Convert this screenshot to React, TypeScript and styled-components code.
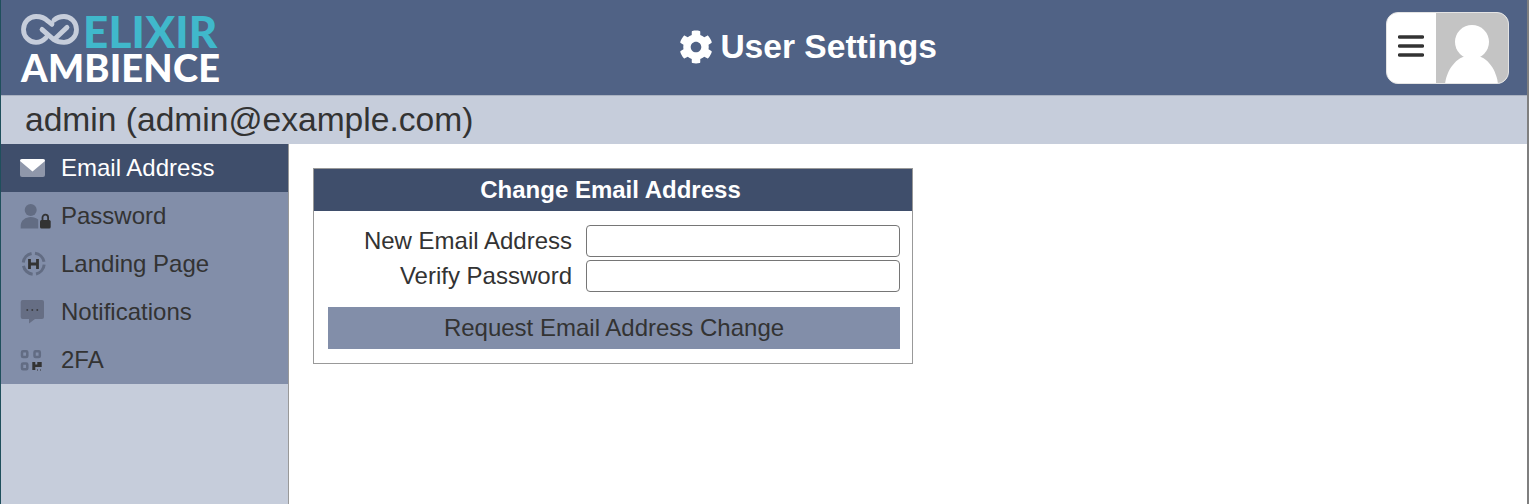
import React from 'react'
import styled, { createGlobalStyle } from 'styled-components'
import { FaCog } from 'react-icons/fa'

const GlobalStyle = createGlobalStyle`
  html, body {
    margin: 0;
    padding: 0;
    height: 100%;
    background: #ffffff;
  }
  body {
    font-family: "Liberation Sans", Arial, sans-serif;
    color: #333333;
    overflow: hidden;
  }
`

const Page = styled.div`
  width: 1529px;
  height: 504px;
  box-sizing: border-box;
  display: flex;
  flex-direction: column;
  border-left: 1px solid #1f4f5c;
  border-right: 2px solid #7f7f7f;
`

const Header = styled.header`
  height: 95px;
  flex: none;
  box-sizing: border-box;
  display: flex;
  justify-content: space-between;
  align-items: center;
  padding: 0 18px 0 20px;
  background: #506285;
`

const Logo = styled.div`
  display: flex;
  flex-direction: column;
  font-family: Lato, "Liberation Sans", sans-serif;
  padding-top: 3px;
`

const LogoTop = styled.div`
  display: flex;
  align-items: center;
  gap: 2px;
  height: 37px;
  line-height: 35px;
  color: #40b8cb;
  font-size: 44px;
  font-weight: 900;
  letter-spacing: 0.2px;
`

const LogoBottom = styled.div`
  height: 35px;
  line-height: 35px;
  color: #ffffff;
  font-size: 38px;
  font-weight: 900;
  letter-spacing: 0.2px;
`

const LogoMark = styled.svg`
  margin-bottom: 3px;
`

const Title = styled.h1`
  margin: 0 0 2px 10px;
  display: flex;
  align-items: center;
  gap: 7px;
  color: #ffffff;
  font-size: 33.6px;
  font-weight: 700;
`

const UserMenu = styled.div`
  width: 123px;
  height: 72px;
  display: flex;
  border-radius: 12px;
  overflow: hidden;
  background: #ffffff;
  border: 1px solid #e4e4e4;
  box-sizing: border-box;
`

const MenuButton = styled.div`
  width: 49px;
  box-sizing: border-box;
  padding-bottom: 4px;
  display: flex;
  align-items: center;
  justify-content: center;
`

const Avatar = styled.div`
  flex: 1;
  background: #c4c4c4;
`

const UserBar = styled.div`
  height: 49px;
  flex: none;
  box-sizing: border-box;
  padding-left: 24px;
  border-top: 1px solid #aab2c1;
  background: #c6cddb;
  font-size: 33.6px;
  line-height: 47px;
  color: #333333;
`

const Body = styled.div`
  flex: 1;
  display: flex;
  min-height: 0;
`

const Sidebar = styled.nav`
  width: 287px;
  flex: none;
  background: #c6cddb;
  border-right: 1px solid #999999;
`

const NavItem = styled.div<{ $active?: boolean }>`
  height: 48px;
  display: flex;
  align-items: center;
  gap: 13px;
  padding-left: 17px;
  font-size: 24px;
  background: ${(p) => (p.$active ? '#3f4e6b' : '#828ea9')};
  color: ${(p) => (p.$active ? '#ffffff' : '#333333')};
`

const NavIcon = styled.svg`
  width: 30px;
  height: 30px;
  flex: none;
  overflow: visible;
`

const Content = styled.main`
  flex: 1;
  padding: 24px;
`

const Panel = styled.section`
  width: 600px;
  box-sizing: border-box;
  border: 1px solid #999999;
`

const PanelTitle = styled.div`
  height: 42px;
  background: #3f4e6b;
  color: #ffffff;
  font-size: 24px;
  font-weight: 700;
  line-height: 42px;
  padding-right: 5px;
  text-align: center;
`

const PanelBody = styled.div`
  padding: 14px 12px 14px 14px;
`

const FormRow = styled.label`
  display: grid;
  grid-template-columns: 244px 314px;
  column-gap: 14px;
  align-items: center;
  height: 32px;
  margin-bottom: 3px;
  font-size: 24px;
  text-align: right;
`

const TextInput = styled.input`
  width: 314px;
  height: 32px;
  box-sizing: border-box;
  border: 1px solid #767676;
  border-radius: 4px;
  padding: 0 4px;
  background: #ffffff;
`

const SubmitButton = styled.button`
  display: block;
  width: 572px;
  height: 42px;
  margin-top: 15px;
  padding: 0;
  border: 0;
  background: #828ea9;
  color: #333333;
  font-family: inherit;
  font-size: 24px;
`

const InfinityMark = () => (
  <LogoMark width="60" height="32" viewBox="0 0 60 31" fill="none" preserveAspectRatio="none">
    <path
      d="M31 10 L27 7 C24 4 20 2.500 15 2.500 A12.500 12.500 0 0 0 15 27.500 C19 27.500 22 26 25 23 M21 15 L33 25 C36 27 39 27.500 43 27.500 A12.500 12.500 0 0 0 43 2.500 C39 2.500 36 3.500 33 6 M34 24 L46 13"
      stroke="#c6cddb"
      strokeWidth="4.800"
      strokeLinecap="round"
    />
  </LogoMark>
)

const MailIcon = () => (
  <NavIcon viewBox="0 0 30 30">
    <rect x="2" y="6" width="25" height="18" rx="2" fill="#8f97aa" />
    <path d="M2 8a2 2 0 0 1 2-2h21a2 2 0 0 1 2 2L14.500 18.500z" fill="#ffffff" />
  </NavIcon>
)

const PasswordIcon = () => (
  <NavIcon viewBox="0 0 30 30">
    <circle cx="12.700" cy="9" r="6" fill="#626c83" />
    <path d="M2.700 27.500v-3c0-5 5-8.500 10-8.500 3 0 5.500 1 7.500 2.500v9z" fill="#626c83" />
    <rect x="22" y="19" width="10.700" height="8.500" rx="1.500" fill="#333333" />
    <path d="M24.500 19.500v-3a2.800 2.800 0 0 1 5.600 0v3" fill="none" stroke="#333333" strokeWidth="1.800" />
  </NavIcon>
)

const LandingIcon = () => (
  <NavIcon viewBox="0 0 30 30">
    <circle cx="15.700" cy="14.700" r="10.500" fill="none" stroke="#626c83" strokeWidth="3" strokeDasharray="13 3.500" strokeDashoffset="-1" />
    <path d="M11.500 10v10M19.500 10v10M11.500 15h8" stroke="#333333" strokeWidth="2.800" fill="none" />
  </NavIcon>
)

const NotificationIcon = () => (
  <NavIcon viewBox="0 0 30 30">
    <path d="M4.700 3h19.300a2 2 0 0 1 2 2v15a2 2 0 0 1-2 2h-7l-6 4.500v-4.500H4.700a2 2 0 0 1-2-2V5a2 2 0 0 1 2-2z" fill="#666e84" />
    <path d="M8.500 13h1.600M13.500 13h1.600M18.500 13h1.600" stroke="#333333" strokeWidth="1.500" />
  </NavIcon>
)

const QrIcon = () => (
  <NavIcon viewBox="0 0 30 30">
    <g fill="none" stroke="#626c83" strokeWidth="2.500">
      <rect x="4" y="6.300" width="5.300" height="5.700" rx="1" />
      <rect x="16.500" y="6.300" width="5.300" height="5.700" rx="1" />
      <rect x="4" y="18.500" width="5.300" height="5.700" rx="1" />
    </g>
    <path d="M14.300 17h3v2.500h2v-2.500h4.400v5h-6.400v3h-3z" fill="#333333" />
    <path d="M19 25h1M22 25h1" stroke="#333333" strokeWidth="1" />
  </NavIcon>
)

const items = [
  { label: 'Email Address', icon: <MailIcon />, active: true },
  { label: 'Password', icon: <PasswordIcon /> },
  { label: 'Landing Page', icon: <LandingIcon /> },
  { label: 'Notifications', icon: <NotificationIcon /> },
  { label: '2FA', icon: <QrIcon /> },
]

const App: React.FC = () => {
  return (
    <>
      <GlobalStyle />
      <Page>
        <Header>
          <Logo>
            <LogoTop>
              <InfinityMark />
              ELIXIR
            </LogoTop>
            <LogoBottom>AMBIENCE</LogoBottom>
          </Logo>
          <Title>
            <FaCog size={34} color="#ffffff" />
            User Settings
          </Title>
          <UserMenu>
            <MenuButton>
              <svg width="26" height="24" viewBox="0 0 26 24">
                <path d="M1.500 3h23M1.500 12h23M1.500 21h23" stroke="#333333" strokeWidth="3.500" strokeLinecap="round" />
              </svg>
            </MenuButton>
            <Avatar>
              <svg width="72" height="70" viewBox="0 0 72 70">
                <circle cx="36" cy="29" r="17" fill="#ffffff" />
                <path d="M9 71C11 55 22 42 36 42C50 42 60 55 62 71z" fill="#ffffff" />
              </svg>
            </Avatar>
          </UserMenu>
        </Header>
        <UserBar>admin (admin@example.com)</UserBar>
        <Body>
          <Sidebar>
            {items.map((item) => (
              <NavItem key={item.label} $active={item.active}>
                {item.icon}
                {item.label}
              </NavItem>
            ))}
          </Sidebar>
          <Content>
            <Panel>
              <PanelTitle>Change Email Address</PanelTitle>
              <PanelBody>
                <FormRow>
                  New Email Address
                  <TextInput type="text" />
                </FormRow>
                <FormRow>
                  Verify Password
                  <TextInput type="password" />
                </FormRow>
                <SubmitButton>Request Email Address Change</SubmitButton>
              </PanelBody>
            </Panel>
          </Content>
        </Body>
      </Page>
    </>
  )
}

export default App
